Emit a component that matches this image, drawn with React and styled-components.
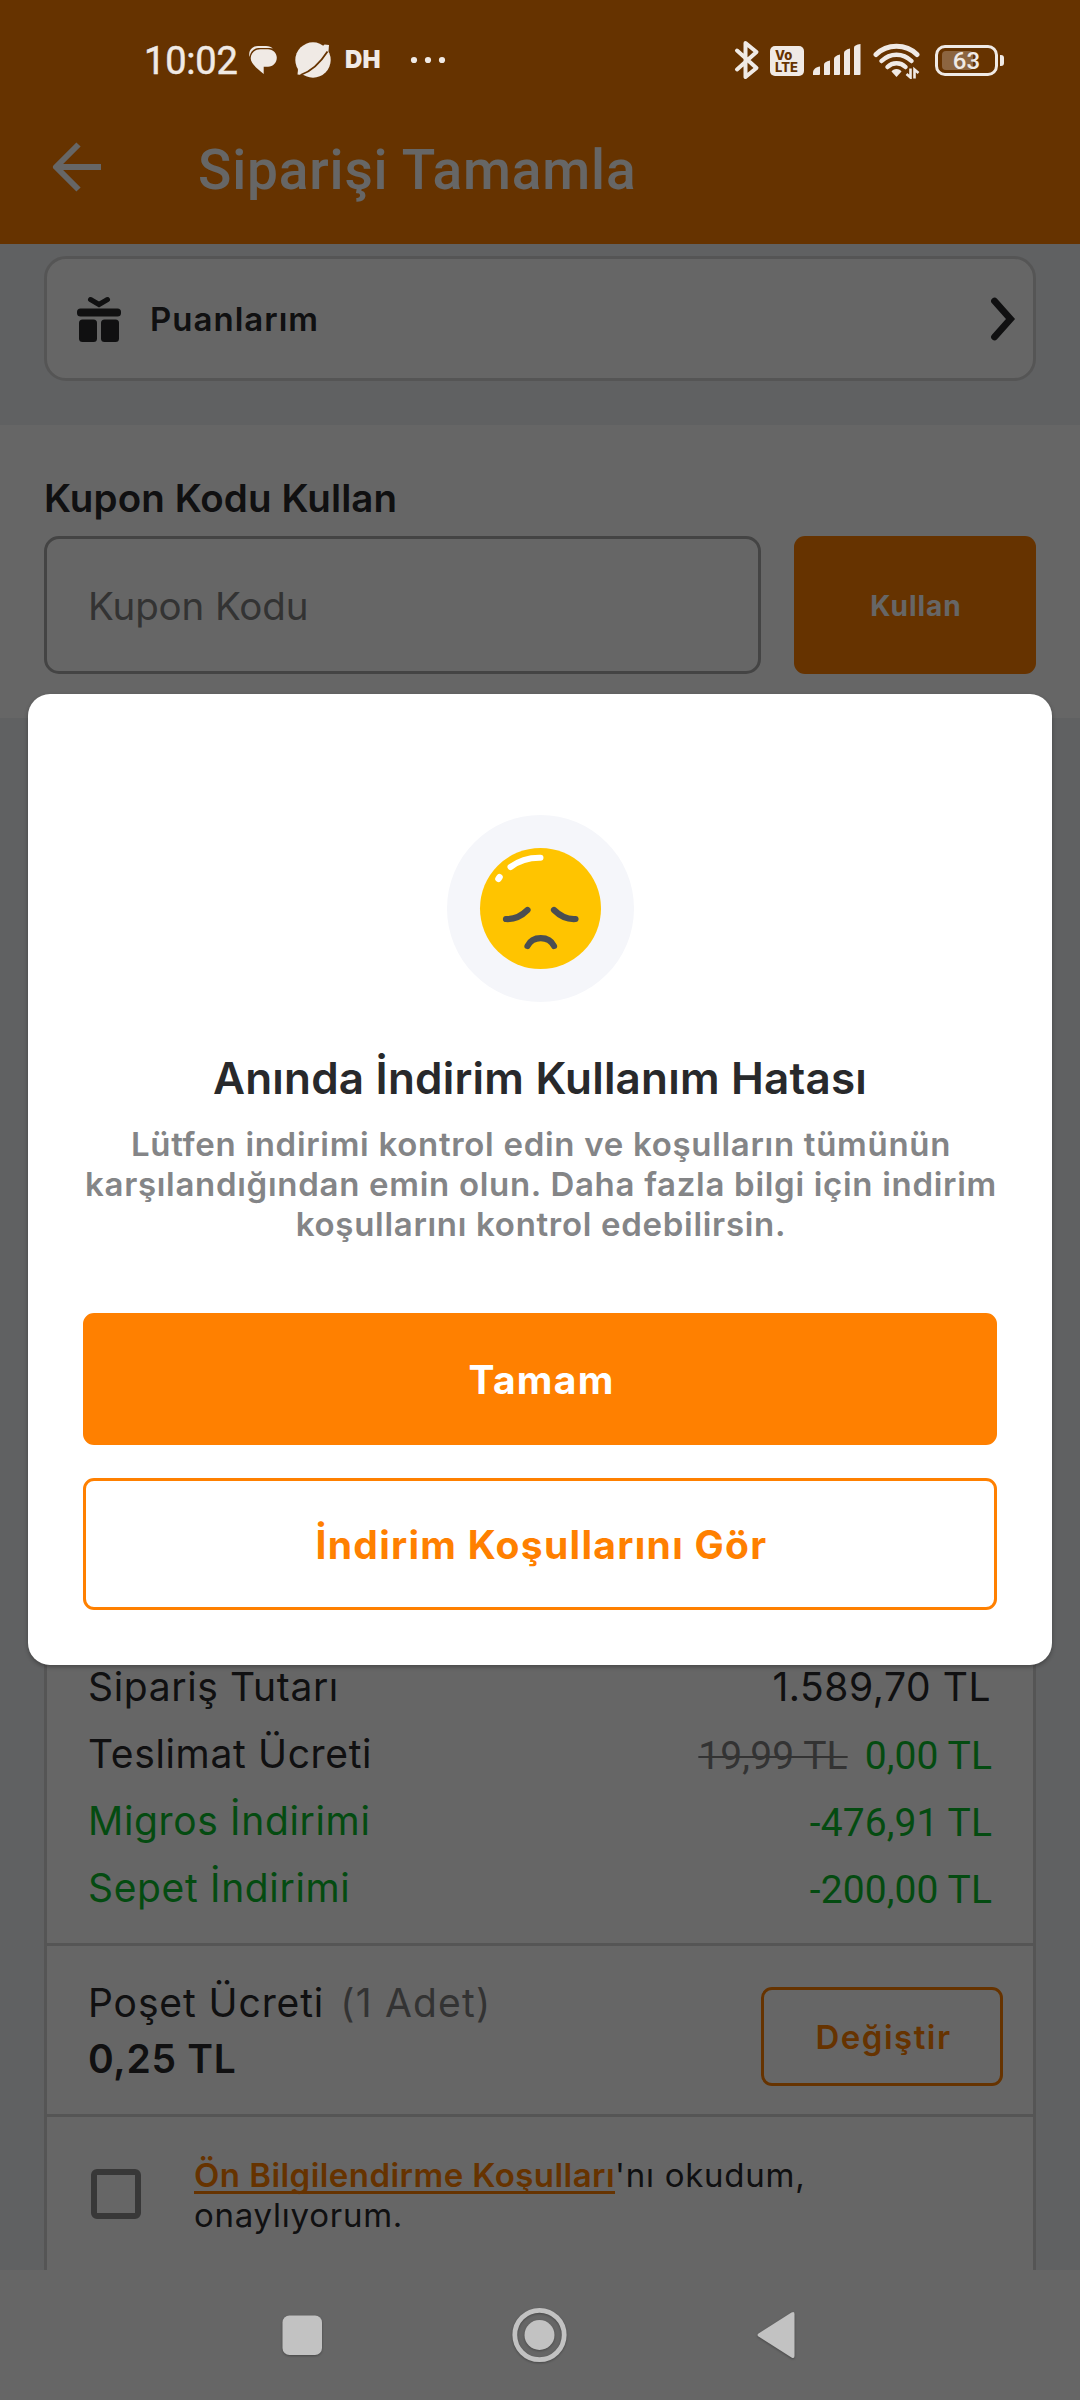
import React from 'react'
import styled, { createGlobalStyle } from 'styled-components';

const GlobalStyle = createGlobalStyle`
* {
    box-sizing: border-box;
}
body {
    margin: 0;
    background-color: #ffffff;
    font-family: "Inter", "Roboto", sans-serif;
    color: #28292b;
}
`;

const Screen = styled.div`
position: relative;
width: 1080px;
height: 2400px;
overflow: hidden;
display: flex;
flex-direction: column;
background-color: #eff2f6;
`;

/* android status bar, stays bright above the dimmed page */
const StatusBar = styled.div`
position: absolute;
top: 0;
left: 0;
z-index: 3;
width: 100%;
height: 120px;
padding: 0 82px 0 144px;
display: flex;
align-items: center;
justify-content: space-between;
color: #f0eae5;
`;

const StatusGroup = styled.div`
display: flex;
align-items: center;
`;

const Time = styled.span`
width: 104px;
padding-top: 2px;
font: 400 38px/44px "Roboto", sans-serif;
letter-spacing: -0.2px;
-webkit-text-stroke: 0.5px #f0eae5;
`;

const AppLabel = styled.span`
width: 65px;
margin-left: 13px;
font: 900 24px/30px "Inter", sans-serif;
letter-spacing: 0.2px;
`;

const Volte = styled.span`
width: 34px;
height: 30px;
margin: 1px 9px 0 10px;
padding: 3px 0 0 5px;
border-radius: 5px;
background-color: #f0eae5;
color: #663300;
font: 800 13px/12px "Inter", sans-serif;
white-space: pre-line;
`;

const Battery = styled.span`
position: relative;
width: 63px;
height: 31px;
margin-left: 15px;
border: 3px solid #f0eae5;
border-radius: 10px;
display: flex;
align-items: center;
justify-content: center;
font: 500 24px/24px "Roboto", sans-serif;

&::before {
    content: '';
    position: absolute;
    left: 4px;
    top: 3px;
    width: 31px;
    height: 19px;
    border-radius: 4px;
    background-color: rgba(240, 234, 229, 0.28);
}
&::after {
    content: '';
    position: absolute;
    right: -9px;
    top: 7px;
    width: 4px;
    height: 11px;
    border-radius: 0 3px 3px 0;
    background-color: #f0eae5;
}
span {
    z-index: 1;
    padding-top: 2px;
}
`;

const AppBar = styled.header`
height: 244px;
padding: 96px 0 0 51px;
display: flex;
align-items: center;
gap: 93px;
flex-shrink: 0;
background-color: #ff8000;
color: #ffffff;

svg {
    margin-bottom: 6px;
}
`;

const PageTitle = styled.h1`
margin: 0;
font: 500 55px/70px "Roboto", sans-serif;
letter-spacing: 0.85px;
`;

const PointsSection = styled.section`
height: 181px;
padding: 12px 44px 44px;
flex-shrink: 0;
`;

const PointsCard = styled.div`
height: 125px;
padding: 0 17px 0 30px;
border: 3px solid #d5d5d5;
border-radius: 22px;
background-color: #ffffff;
display: flex;
align-items: center;
`;

const PointsLabel = styled.span`
flex: 1;
margin-left: 29px;
font-size: 33px;
font-weight: 600;
line-height: 40px;
letter-spacing: 1px;
`;

const CouponSection = styled.section`
height: 293px;
padding: 49px 44px 44px;
flex-shrink: 0;
background-color: #ffffff;
`;

const SectionTitle = styled.h2`
margin: 0 0 14px;
font-size: 38.5px;
font-weight: 600;
line-height: 48px;
letter-spacing: 0.1px;
`;

const CouponRow = styled.div`
display: flex;
gap: 33px;
`;

const CouponInput = styled.div`
width: 717px;
height: 138px;
padding: 1px 0 0 41px;
border: 3px solid #aaaaaa;
border-radius: 15px;
display: flex;
align-items: center;
color: #808080;
font-size: 38.5px;
letter-spacing: -0.1px;
`;

const UseButton = styled.button`
width: 242px;
height: 138px;
padding: 2px 0 0 2px;
border: none;
border-radius: 11px;
background-color: #ff8000;
color: #ffffff;
font: 700 28px/34px "Inter", sans-serif;
letter-spacing: 1px;
`;

const Summary = styled.section`
flex: 1;
margin: 0 44px;
border: 3px solid #d5d5d5;
border-bottom: none;
background-color: #ffffff;
display: flex;
flex-direction: column;
justify-content: flex-end;
`;

const Prices = styled.div`
padding: 0 43px 22px 41px;
border-bottom: 3px solid #d5d5d5;
`;

const PriceRow = styled.div`
height: 67px;
display: flex;
justify-content: space-between;
align-items: center;
font-size: 39px;
line-height: 48px;
letter-spacing: 0.65px;
white-space: nowrap;
color: ${(p) => (p.$green ? '#0abb2c' : '#28292b')};
`;

const Amount = styled.span`
padding-top: ${(p) => (p.$roboto ? '4px' : '0')};
margin-right: ${(p) => (p.$roboto ? '-2px' : '-1px')};
font-family: ${(p) => (p.$roboto ? '"Roboto", sans-serif' : 'inherit')};
letter-spacing: ${(p) => (p.$roboto ? '0.1px' : '0.55px')};
`;

const OldPrice = styled.s`
margin-right: 17px;
color: #808080;
text-decoration-thickness: 2px;
`;

const FreePrice = styled.span`
color: #0abb2c;
`;

const BagRow = styled.div`
height: 171px;
padding: 0 30px 0 41px;
border-bottom: 3px solid #d5d5d5;
display: flex;
justify-content: space-between;
align-items: center;
`;

const BagText = styled.div`
padding-top: 2px;
font-size: 39px;
line-height: 56px;
letter-spacing: 0.9px;

span {
    margin-left: 16px;
    color: #808080;
    letter-spacing: 1.2px;
}
strong {
    display: block;
    font-weight: 600;
    letter-spacing: 0.7px;
}
`;

const ChangeButton = styled.button`
width: 242px;
height: 99px;
margin-top: 13px;
padding: 0 0 0 3px;
border: 3px solid #ff8000;
border-radius: 11px;
background-color: transparent;
color: #ff8000;
font: 600 33px/40px "Inter", sans-serif;
letter-spacing: 1.5px;
`;

const AgreementRow = styled.div`
height: 153px;
padding: 37px 43px 0 44px;
display: flex;
`;

const Checkbox = styled.span`
width: 50px;
height: 50px;
margin: 15px 53px 0 0;
border: 6px solid #8c8c8c;
border-radius: 6px;
`;

const Agreement = styled.p`
margin: 1px 0 0;
width: 640px;
font-size: 33px;
line-height: 40px;
letter-spacing: 0.75px;

a {
    color: #ff8000;
    font-weight: 600;
    letter-spacing: 0.45px;
    text-decoration: underline;
    text-decoration-thickness: 3px;
    text-underline-offset: 4px;
    text-decoration-skip-ink: none;
}
`;

const NavSpace = styled.div`
height: 130px;
flex-shrink: 0;
background-color: #ffffff;
`;

const NavBar = styled.nav`
position: absolute;
left: 0;
bottom: 0;
z-index: 3;
width: 100%;
height: 130px;
padding-left: 272px;
display: flex;
align-items: center;
gap: 177px;

svg {
    filter: drop-shadow(0 1px 1px rgba(0, 0, 0, 0.3));
}
`;

const Backdrop = styled.div`
position: absolute;
inset: 0;
z-index: 2;
padding-top: 694px;
display: flex;
align-items: flex-start;
justify-content: center;
background-color: rgba(0, 0, 0, 0.6);
`;

const Dialog = styled.div`
width: 1024px;
height: 971px;
padding: 121px 55px 0;
border-radius: 22px;
background-color: #ffffff;
box-shadow: 0 2px 4px rgba(0, 0, 0, 0.3);
display: flex;
flex-direction: column;
align-items: center;
`;

const DialogTitle = styled.h2`
margin: 48px 0 0;
font-size: 44px;
font-weight: 600;
line-height: 56px;
letter-spacing: 0.2px;
`;

const DialogText = styled.p`
margin: 18px 0 69px;
padding-left: 2px;
font-size: 33px;
font-weight: 600;
line-height: 40px;
letter-spacing: 0.7px;
color: #848587;
text-align: center;
white-space: pre-line;
`;

const DialogButton = styled.button`
width: 914px;
height: 132px;
margin-bottom: 33px;
padding: 2px 0 0 3px;
border: 3px solid #ff8000;
border-radius: 11px;
background-color: ${(p) => (p.$outlined ? '#ffffff' : '#ff8000')};
color: ${(p) => (p.$outlined ? '#ff8000' : '#ffffff')};
font: 700 39px/48px "Inter", sans-serif;
letter-spacing: 1.3px;
`;

const PlanetWrap = styled.span`
height: 38px;
margin-left: 16px;
`;

const WifiWrap = styled.span`
height: 37px;
margin-left: 12px;
`;

const ChatIcon = () => (
    <svg width="30" height="30" viewBox="0 0 30 30" fill="currentColor">
        <path d="M1.500 12C0 5 4.500 1 10 1h8c3 0 5.500 1 6.800 2.600C23 3.100 21 3 18.500 3H12C6 3 2.500 6 1.500 12z" />
        <path d="M12.500 4.200h7.500c5 0 8.800 3.600 8.800 8.600s-3.800 8.800-8.800 9h-4.300V29C9 23.500 2.700 18.500 2.700 13.300c0-5.300 4.300-9.100 9.800-9.100z" />
    </svg>
);

const PlanetIcon = () => (
    <svg width="38" height="38" viewBox="0 0 38 38">
        <circle cx="19" cy="19" r="17.700" fill="#f0eae5" />
        <path d="M30.500 3.500l4.500.5-.500 6C27 22 17 30.500 8 34l-4.500-.500.500-5z" fill="#f0eae5" />
        <path d="M33.500 10.500C26.500 21.500 17 30.500 6.500 34" fill="none" stroke="#663300" strokeWidth="1.800" />
    </svg>
);

const DotsIcon = () => (
    <svg width="36" height="8" viewBox="0 0 36 8" fill="currentColor">
        <circle cx="4" cy="4" r="3.100" />
        <circle cx="18" cy="4" r="3.100" />
        <circle cx="32" cy="4" r="3.100" />
    </svg>
);

const BluetoothIcon = () => (
    <svg width="26" height="40" viewBox="0 0 26 40" fill="none" stroke="currentColor" strokeWidth="4" strokeLinejoin="round" strokeLinecap="round">
        <path d="M3 10.500L22.500 28 11.500 37V3l11 9L3 29.500" />
    </svg>
);

const SignalIcon = () => (
    <svg width="48" height="32" viewBox="0 0 48 32" fill="currentColor">
        <path d="M0 31v-2.500c0-3 3-5.500 7-6v7.500q0 1-1 1z" />
        <path d="M11 31V20.500q0-2.500 6-4V30q0 1-1 1z" />
        <path d="M21 31V15q0-3 6-4.500V30q0 1-1 1z" />
        <path d="M31 31V9q0-3 6-4.500V30q0 1-1 1z" />
        <path d="M41 31V3.500Q41 1 47.500 0v30q0 1-1 1z" />
    </svg>
);

const WifiIcon = () => (
    <svg width="47" height="37" viewBox="0 0 47 37" fill="none" stroke="currentColor">
        <path d="M3 12.500C14 1.500 33 1.500 44 12.500" strokeWidth="5" strokeLinecap="round" />
        <path d="M8.500 19C17 10.500 30 10.500 38.500 19" strokeWidth="4.500" strokeLinecap="round" />
        <path d="M14.500 25C19.500 20 27.500 20 32.500 25" strokeWidth="4.500" strokeLinecap="round" />
        <path d="M23.500 27c2.500 0 4 1 5 2.500l-5 5.500-5-5.500c1-1.500 2.500-2.500 5-2.500z" fill="currentColor" stroke="none" />
        <path d="M37.500 26.500v9l-4-3.500M41.500 36.500v-9l4 3.500" strokeWidth="2.600" />
    </svg>
);

const BackIcon = () => (
    <svg width="54" height="54" viewBox="0 0 54 54" fill="none" stroke="currentColor" strokeWidth="6">
        <path d="M27.500 4.500L5 27l22.500 22.500" strokeLinejoin="round" />
        <path d="M6 27h44" />
    </svg>
);

const GiftIcon = () => (
    <svg width="44" height="46" viewBox="0 0 44 46" fill="#28292b">
        <path d="M13.500 3.500L22 8.500l8.500-5" fill="none" stroke="#28292b" strokeWidth="5" strokeLinecap="round" />
        <rect x="0" y="12.500" width="44" height="8" rx="3.500" />
        <rect x="2" y="23.500" width="18" height="22.500" rx="3.500" />
        <rect x="24" y="23.500" width="18" height="22.500" rx="3.500" />
    </svg>
);

const ChevronIcon = () => (
    <svg width="26" height="44" viewBox="0 0 26 44" fill="none" stroke="#28292b" strokeWidth="6.800">
        <path d="M4.500 4L20.500 22 4.500 40" strokeLinecap="round" />
    </svg>
);

const SadFace = () => (
    <svg width="187" height="187" viewBox="0 0 187 187" fill="none" strokeLinecap="round">
        <circle cx="93.500" cy="93.500" r="93.500" fill="#f5f6fa" />
        <circle cx="93.500" cy="93.500" r="60.500" fill="#ffc400" />
        <path d="M63.500 52C72 45.500 82 42.500 93.500 42.700" stroke="#ffffff" strokeWidth="6" />
        <path d="M51.500 63.800l1-1.500" stroke="#ffffff" strokeWidth="6.500" />
        <g stroke="#4a4e52" strokeWidth="6.200">
            <path d="M59 104c8 .5 15.500-3 21.500-9" />
            <path d="M128.500 104c-8 .5-15.500-3-21.500-9" />
            <path d="M80.500 131c5-10.500 21.500-10.500 26.500 0" />
        </g>
    </svg>
);

const App = () => {
    return (
        <>
            <GlobalStyle />
            <Screen>
                <AppBar>
                    <BackIcon />
                    <PageTitle>Siparişi Tamamla</PageTitle>
                </AppBar>

                <PointsSection>
                    <PointsCard>
                        <GiftIcon />
                        <PointsLabel>Puanlarım</PointsLabel>
                        <ChevronIcon />
                    </PointsCard>
                </PointsSection>

                <CouponSection>
                    <SectionTitle>Kupon Kodu Kullan</SectionTitle>
                    <CouponRow>
                        <CouponInput>Kupon Kodu</CouponInput>
                        <UseButton>Kullan</UseButton>
                    </CouponRow>
                </CouponSection>

                <Summary>
                    <Prices>
                        <PriceRow>
                            <span>Sipariş Tutarı</span>
                            <Amount>1.589,70 TL</Amount>
                        </PriceRow>
                        <PriceRow>
                            <span>Teslimat Ücreti</span>
                            <Amount $roboto>
                                <OldPrice>19,99 TL</OldPrice>
                                <FreePrice>0,00 TL</FreePrice>
                            </Amount>
                        </PriceRow>
                        <PriceRow $green>
                            <span>Migros İndirimi</span>
                            <Amount $roboto>-476,91 TL</Amount>
                        </PriceRow>
                        <PriceRow $green>
                            <span>Sepet İndirimi</span>
                            <Amount $roboto>-200,00 TL</Amount>
                        </PriceRow>
                    </Prices>
                    <BagRow>
                        <BagText>
                            Poşet Ücreti<span>(1 Adet)</span>
                            <strong>0,25 TL</strong>
                        </BagText>
                        <ChangeButton>Değiştir</ChangeButton>
                    </BagRow>
                    <AgreementRow>
                        <Checkbox />
                        <Agreement>
                            <a>Ön Bilgilendirme Koşulları</a>'nı okudum, onaylıyorum.
                        </Agreement>
                    </AgreementRow>
                </Summary>
                <NavSpace />

                <Backdrop>
                    <Dialog>
                        <SadFace />
                        <DialogTitle>Anında İndirim Kullanım Hatası</DialogTitle>
                        <DialogText>
                            {'Lütfen indirimi kontrol edin ve koşulların tümünün\nkarşılandığından emin olun. Daha fazla bilgi için indirim\nkoşullarını kontrol edebilirsin.'}
                        </DialogText>
                        <DialogButton>Tamam</DialogButton>
                        <DialogButton $outlined>İndirim Koşullarını Gör</DialogButton>
                    </Dialog>
                </Backdrop>

                <StatusBar>
                    <StatusGroup>
                        <Time>10:02</Time>
                        <ChatIcon />
                        <PlanetWrap><PlanetIcon /></PlanetWrap>
                        <AppLabel>DH</AppLabel>
                        <DotsIcon />
                    </StatusGroup>
                    <StatusGroup>
                        <BluetoothIcon />
                        <Volte>{'Vo\nLTE'}</Volte>
                        <SignalIcon />
                        <WifiWrap><WifiIcon /></WifiWrap>
                        <Battery><span>63</span></Battery>
                    </StatusGroup>
                </StatusBar>

                <NavBar>
                    <svg width="60" height="60" viewBox="0 0 60 60">
                        <rect x="10.500" y="10.500" width="39.500" height="39.500" rx="7" fill="#c2c2c2" />
                    </svg>
                    <svg width="60" height="60" viewBox="0 0 60 60">
                        <circle cx="30.500" cy="30" r="24.700" fill="none" stroke="#c2c2c2" strokeWidth="4.800" />
                        <circle cx="30.500" cy="30" r="15" fill="#c2c2c2" />
                    </svg>
                    <svg width="60" height="60" viewBox="0 0 60 60">
                        <path d="M12.500 28.500L45.500 7.500q3-1.500 3 1.500v42q0 3-3 1.500L12.500 31.500q-2-1.500 0-3z" fill="#c2c2c2" />
                    </svg>
                </NavBar>
            </Screen>
        </>
    )
}

export default App
